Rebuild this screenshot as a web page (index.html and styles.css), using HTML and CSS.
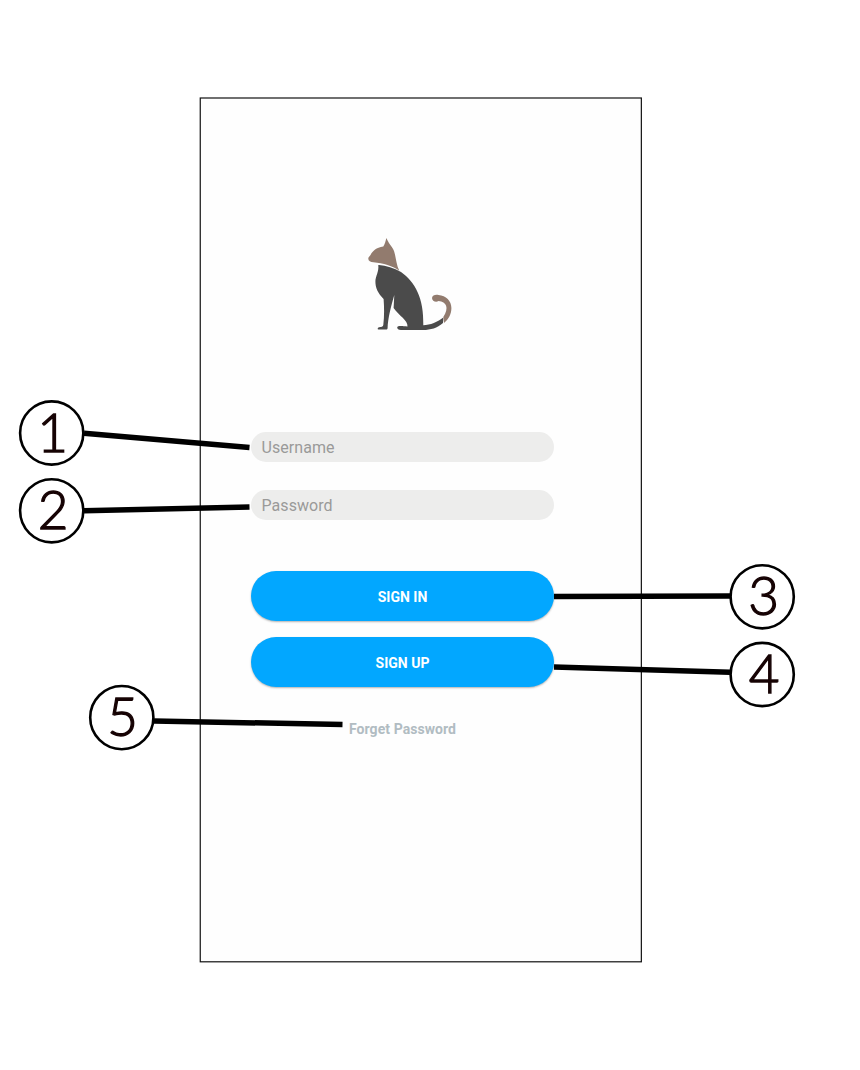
FILE: index.html
```html
<!DOCTYPE html>
<html lang="en">
<head>
<meta charset="utf-8">
<title>Sign in</title>
<link rel="stylesheet" href="styles.css">
</head>
<body>
<main class="canvas">
  <section class="phone">
    <form class="login">
      <svg class="logo" viewBox="360 230 100 110" width="100" height="110" aria-hidden="true">
        <path class="brown" d="M386.400 238C387.500 241 390 244.500 391.800 247C396.300 252.500 395 262 399.300 270.700C393 266 383 263 373.500 262.200C370.500 262.200 368.200 260.800 368.300 258.600C368.400 257 369.500 256.500 370.500 255C373 250.500 376 248 383.300 246.600C385 244 385.500 241 386.400 238Z"/>
        <path class="dark" d="M379 265C386 265.500 394 268 401 272C415 282 424 298 423.300 325.300C430 325 438 322 443.300 317.500L443 323C437 328 431 330 423 330H401C398.500 330 397 328.800 397.200 327.200C397.500 326 400 325.500 407.500 326.500C408 320 399 316 393.600 308L394.300 295C391 306 388 318 387.600 328C387.500 329.300 387 329.600 386 329.600H378.500C377.200 329.600 377.500 327.600 379 327.300C381.500 327 383 326.600 383.300 325C384.400 316 384.200 307 383.600 299C378 293 375.300 288 375.400 281C375.600 276 379 272 378.300 265Z"/>
        <path class="brown" d="M444 323L443.300 317C449.300 308 446.500 301.500 438.500 301C436 303 432 301 432 298C432.300 295 435.500 294.500 438.500 295C446 295.500 451.400 301 451.400 308C451.400 314 448.500 319.500 444 323Z"/>
      </svg>
      <input class="field username" type="text" placeholder="Username">
      <input class="field password" type="text" placeholder="Password">
      <button class="button" type="button">SIGN IN</button>
      <button class="button" type="button">SIGN UP</button>
      <a class="forgot">Forget Password</a>
    </form>
  </section>
  <svg class="callouts" viewBox="0 0 860 1070" width="860" height="1070">
    <rect class="frame" x="200.250" y="98" width="441.100" height="863.800"/>
    <g class="leaders">
      <path d="M84 433.300L249.500 447.400M84 510.800L249.500 507M554 596.500L730 596M554 667L730 672.200M154 721L342.500 724.500"/>
    </g>
    <g class="rings">
      <circle cx="51.700" cy="433" r="31.600"/>
      <circle cx="51.700" cy="510.800" r="31.600"/>
      <circle cx="762.200" cy="596.800" r="31.600"/>
      <circle cx="762.200" cy="674.500" r="31.600"/>
      <circle cx="121.800" cy="717.600" r="31.600"/>
    </g>
    <g class="numbers">
      <text x="52.500" y="451.700">1</text>
      <text x="53" y="528.500">2</text>
      <text x="763.500" y="614.800">3</text>
      <text x="764" y="692.500">4</text>
      <text x="122.500" y="735.500">5</text>
    </g>
  </svg>
</main>
</body>
</html>
```
FILE: styles.css
```css
body { margin: 0; background: #fff; }
.canvas {
  position: relative;
  box-sizing: border-box;
  width: 860px;
  height: 1070px;
  padding: 98px 0 0 200px;
  overflow: hidden;
  font-family: Roboto, sans-serif;
}
.phone {
  box-sizing: border-box;
  width: 441px;
  height: 864px;
  background: #fefefe;
}
.login {
  display: flex;
  flex-direction: column;
  width: 303px;
  margin: 0 0 0 51px;
  padding-top: 132px;
}
.logo { margin-left: 109px; }
.brown { fill: #927b6e; }
.dark { fill: #4b4b4b; }
.field {
  box-sizing: border-box;
  width: 303px;
  height: 30px;
  padding: 1px 10.5px 0;
  border: 0;
  border-radius: 15px;
  background: #ededec;
  font: 16px Roboto, sans-serif;
  letter-spacing: .06px;
}
.field::placeholder { color: #9a9a99; opacity: 1; }
.username { margin-top: 92px; }
.password { margin: 28px 0 51px; }
.button {
  width: 303px;
  height: 50px;
  margin-bottom: 16px;
  padding: 1px 0 0;
  border: 0;
  border-radius: 25px;
  background: #02a7ff;
  box-shadow: 0 1px 2px rgba(0, 0, 0, .3);
  color: #fff;
  font: 700 14px Roboto, sans-serif;
}
.forgot {
  margin-top: 18px;
  color: #b1bcc2;
  font-size: 14px;
  font-weight: 700;
  line-height: 16px;
  letter-spacing: .07px;
  text-align: center;
}
.callouts { position: absolute; left: 0; top: 0; pointer-events: none; }
.frame { fill: none; stroke: #111; stroke-width: 1.200; }
.leaders { stroke: #000; stroke-width: 5.500; }
.rings { fill: #fff; stroke: #000; stroke-width: 2.600; }
.numbers {
  fill: #160304;
  stroke: #160304;
  stroke-width: 1.300;
  font: 300 53px Lato, sans-serif;
  text-anchor: middle;
}
```
